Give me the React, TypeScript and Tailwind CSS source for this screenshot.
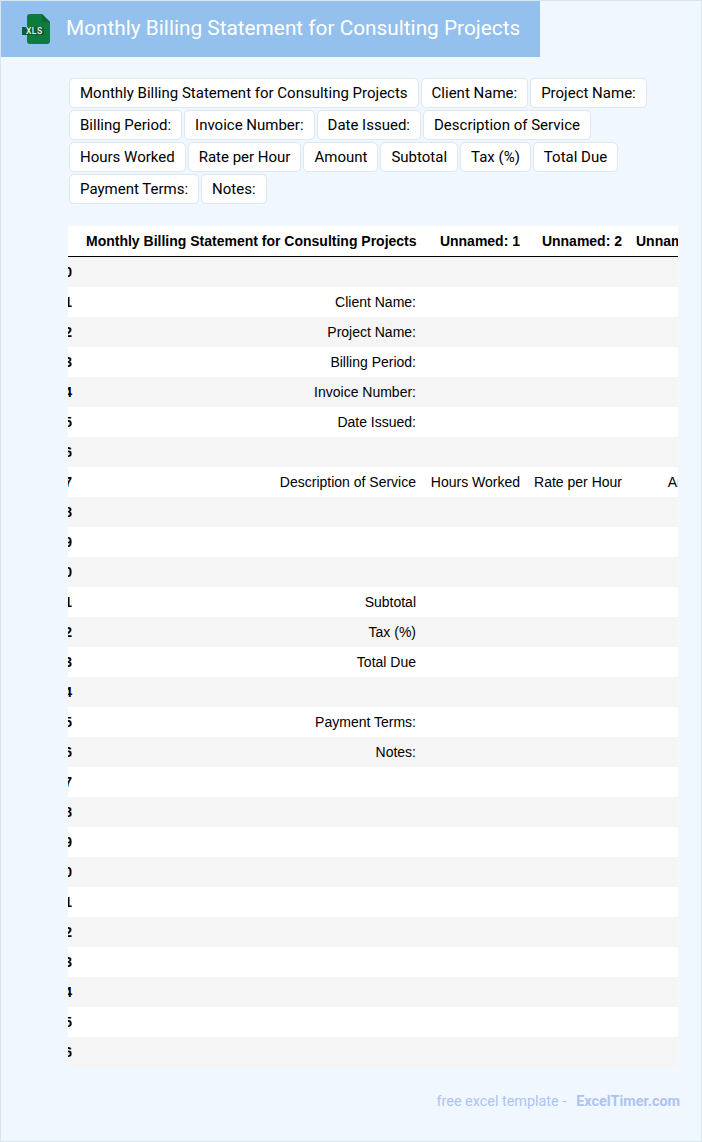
const tags = [
  'Monthly Billing Statement for Consulting Projects',
  'Client Name:',
  'Project Name:',
  'Billing Period:',
  'Invoice Number:',
  'Date Issued:',
  'Description of Service',
  'Hours Worked',
  'Rate per Hour',
  'Amount',
  'Subtotal',
  'Tax (%)',
  'Total Due',
  'Payment Terms:',
  'Notes:',
]

const headers = [
  'Monthly Billing Statement for Consulting Projects',
  'Unnamed: 1',
  'Unnamed: 2',
  'Unnamed: 3',
]

// rows keyed by index, anything missing stays blank
const rows: Record<number, string[]> = {
  1: ['Client Name:'],
  2: ['Project Name:'],
  3: ['Billing Period:'],
  4: ['Invoice Number:'],
  5: ['Date Issued:'],
  7: ['Description of Service', 'Hours Worked', 'Rate per Hour', 'Amount'],
  11: ['Subtotal'],
  12: ['Tax (%)'],
  13: ['Total Due'],
  15: ['Payment Terms:'],
  16: ['Notes:'],
}

function XlsIcon() {
  return (
    <svg width="28" height="30" viewBox="0 0 28 30" className="shrink-0">
      <path d="M5 3 a3 3 0 0 1 3-3 H20 L28 8 V27 a3 3 0 0 1-3 3 H8 a3 3 0 0 1-3-3 Z" fill="#0f7a3e" />
      <path d="M20 0 L28 8 H23 a3 3 0 0 1-3-3 Z" fill="#0b6a35" />
      <rect x="0" y="13" width="22" height="8" fill="#0b5f30" />
      <text x="4" y="20" fontSize="8.5" letterSpacing="0.5" fontWeight="500" fontFamily="Roboto, sans-serif" fill="#eef6f0">XLS</text>
    </svg>
  )
}

export default function App() {
  return (
    <div className="h-[1142px] w-[702px] overflow-hidden border border-[#d9e4f1] bg-[#f0f7ff] font-['Roboto',sans-serif]">
      <header className="flex h-[56px] w-[539px] items-center bg-[#93c0ec] pl-[21px]">
        <XlsIcon />
        <h1 className="mb-[2px] ml-[16px] text-[20.8px] leading-none font-normal whitespace-nowrap text-white">
          Monthly Billing Statement for Consulting Projects
        </h1>
      </header>

      <div className="mt-[21px] ml-[68px] flex w-[610px] flex-wrap gap-[2px]">
        {tags.map((tag) => (
          <span
            key={tag}
            className="h-[30px] rounded-[5px] border border-[#dfe7f1] bg-white px-[10px] text-[15px] leading-[28px] text-black"
          >
            {tag}
          </span>
        ))}
      </div>

      <div className="mt-[22px] ml-[67px] w-[610px] overflow-hidden bg-white font-['Arial','Liberation_Sans',sans-serif] text-[14px] text-black">
        <table className="ml-[-19px] w-[774px] table-fixed border-separate border-spacing-0">
          <colgroup>
            <col className="w-[30px]" />
            <col className="w-[344px]" />
            <col className="w-[104px]" />
            <col className="w-[102px]" />
            <col className="w-[94px]" />
            <col className="w-[100px]" />
          </colgroup>
          <thead>
            <tr>
              <th className="h-[31px] border-b border-black" />
              {headers.map((header) => (
                <th key={header} className="h-[31px] border-b border-black px-[7px] text-right font-bold whitespace-nowrap">
                  {header}
                </th>
              ))}
              <th className="h-[31px] border-b border-black" />
            </tr>
          </thead>
          <tbody>
            {Array.from({ length: 27 }).map((_, index) => (
              <tr key={index} className={index % 2 === 0 ? 'h-[30px] bg-[#f5f5f5]' : 'h-[30px] bg-white'}>
                <th className="px-[7px] text-right font-bold">{index}</th>
                {[0, 1, 2, 3].map((col) => (
                  <td key={col} className="px-[7px] text-right whitespace-nowrap">
                    {rows[index]?.[col] ?? ''}
                  </td>
                ))}
                <td />
              </tr>
            ))}
          </tbody>
        </table>
      </div>

      <footer className="mt-[25px] mr-[21px] flex justify-end text-[14.4px] leading-[20px] text-[#aec3f2]">
        <span>free excel template -</span>
        <span className="ml-[10px] font-bold">ExcelTimer.com</span>
      </footer>
    </div>
  )
}
